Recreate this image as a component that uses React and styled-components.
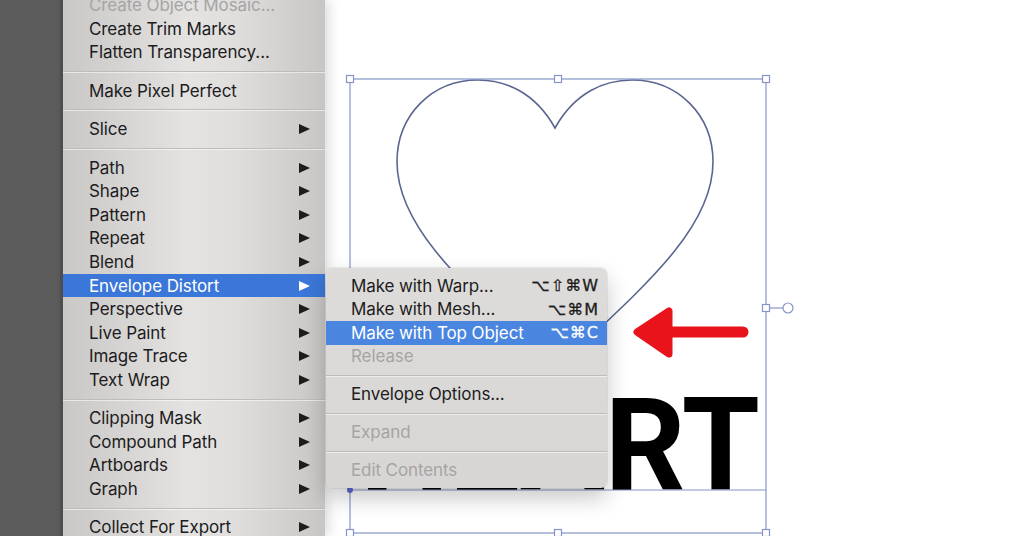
import React from "react";
import styled, { createGlobalStyle } from "styled-components";

const GlobalStyle = createGlobalStyle`
  html, body {
    margin: 0;
    padding: 0;
    background: #fff;
  }
  body {
    font-family: Inter, "Liberation Sans", "DejaVu Sans", sans-serif;
  }
`;

const Page = styled.div`
  display: flex;
  width: 1024px;
  height: 536px;
  overflow: hidden;
`;

const Dock = styled.div`
  width: 63px;
  flex: none;
  background: #5c5c5c;
  box-shadow: inset -3px 0 0 #515151;
`;

const Menu = styled.ul`
  width: 262px;
  flex: none;
  margin: 0;
  padding: 0;
  list-style: none;
  position: relative;
  z-index: 2;
  overflow: hidden;
  background: linear-gradient(
    90deg,
    #cac8c7 0%,
    #d6d4d3 22%,
    #e4e3e2 48%,
    #dfdedd 66%,
    #d2d0cf 86%,
    #c8c6c5 100%
  );
  box-shadow: 3px 0 12px rgba(0, 0, 0, 0.16);
`;

const MenuBody = styled.div`
  margin-top: -6.6px;
`;

const Item = styled.li`
  display: flex;
  align-items: center;
  justify-content: space-between;
  height: 23.6px;
  padding: 0 ${(p) => p.$padRight || 15}px 0 ${(p) => p.$padLeft || 26}px;
  font-size: 17px;
  letter-spacing: -0.1px;
  white-space: nowrap;
  color: ${(p) => (p.$active ? "#fff" : p.$disabled ? "#a6a4a3" : "#1c1c1c")};
  background: ${(p) => (p.$active ? p.$hl || "#3b77d8" : "transparent")};
`;

const Arrow = styled.span`
  width: 0;
  height: 0;
  border-left: 11px solid currentColor;
  border-top: 5.5px solid transparent;
  border-bottom: 5.5px solid transparent;
`;

const Separator = styled.li`
  height: ${(p) => p.$h || 14.8}px;
  display: flex;
  align-items: center;
  &::before {
    content: "";
    flex: 1;
    height: 1px;
    background: #bebcbb;
    box-shadow: 0 1px 0 rgba(255, 255, 255, 0.55);
  }
`;

const Canvas = styled.div`
  flex: 1;
  position: relative;
  background: #fff;
`;

const Artwork = styled.svg`
  display: block;
`;

const Submenu = styled.ul`
  position: absolute;
  left: 1px;
  top: 268px;
  width: 281px;
  margin: 0;
  padding: 5.8px 0 6px;
  list-style: none;
  border-radius: 6px;
  background: linear-gradient(180deg, #dedcdb 0%, #d8d6d5 100%);
  box-shadow: 0 10px 22px rgba(0, 0, 0, 0.22), 0 0 0 0.5px rgba(0, 0, 0, 0.12);
  z-index: 3;
`;

const Shortcut = styled.span`
  font-family: "DejaVu Sans", Inter, sans-serif;
  font-size: 16px;
  letter-spacing: 1px;
  -webkit-text-stroke: 0.3px currentColor;
`;

const mainItems = [
  { label: "Create Object Mosaic...", disabled: true },
  { label: "Create Trim Marks" },
  { label: "Flatten Transparency..." },
  "sep",
  { label: "Make Pixel Perfect" },
  "sep",
  { label: "Slice", sub: true },
  "sep",
  { label: "Path", sub: true },
  { label: "Shape", sub: true },
  { label: "Pattern", sub: true },
  { label: "Repeat", sub: true },
  { label: "Blend", sub: true },
  { label: "Envelope Distort", sub: true, active: true },
  { label: "Perspective", sub: true },
  { label: "Live Paint", sub: true },
  { label: "Image Trace", sub: true },
  { label: "Text Wrap", sub: true },
  "sep",
  { label: "Clipping Mask", sub: true },
  { label: "Compound Path", sub: true },
  { label: "Artboards", sub: true },
  { label: "Graph", sub: true },
  "sep",
  { label: "Collect For Export", sub: true },
];

const subItems = [
  { label: "Make with Warp...", keys: "⌥⇧⌘W" },
  { label: "Make with Mesh...", keys: "⌥⌘M" },
  { label: "Make with Top Object", keys: "⌥⌘C", active: true },
  { label: "Release", disabled: true },
  "sep",
  { label: "Envelope Options..." },
  "sep",
  { label: "Expand", disabled: true },
  "sep",
  { label: "Edit Contents", disabled: true },
];

const BOX = "#8595c8";
const handles = [
  [350, 79],
  [558, 79],
  [766, 79],
  [766, 308],
  [350, 533],
  [558, 533],
  [766, 533],
];

const heart =
  "M555 128 C535 92 505 80 478 80 C432 80 397 115 397 162 " +
  "C397 230 470 290 555 370 C640 290 713 230 713 162 " +
  "C713 115 678 80 632 80 C605 80 575 92 555 128 Z";

export default function App() {
  return (
    <Page>
      <GlobalStyle />
      <Dock />
      <Menu>
        <MenuBody>
          {mainItems.map((it, i) =>
            it === "sep" ? (
              <Separator key={i} />
            ) : (
              <Item key={i} $active={it.active} $disabled={it.disabled}>
                <span>{it.label}</span>
                {it.sub && <Arrow />}
              </Item>
            )
          )}
        </MenuBody>
      </Menu>
      <Canvas>
        <Artwork width="699" height="536" viewBox="325 0 699 536">
          <text
            x="360"
            y="490"
            fontFamily="Roboto, 'Liberation Sans', sans-serif"
            fontWeight="700"
            fontSize="130"
            textLength="400"
            lengthAdjust="spacingAndGlyphs"
            fill="#000"
          >
            HEART
          </text>
          <path d={heart} fill="none" stroke="#5b6690" strokeWidth="1.6" />
          <rect x="350" y="79" width="416" height="454" fill="none" stroke={BOX} strokeWidth="1.2" />
          <line x1="350" y1="490" x2="766" y2="490" stroke={BOX} strokeWidth="1.2" />
          <circle cx="350" cy="490" r="3" fill="#5a6bd0" />
          <line x1="769" y1="308" x2="783" y2="308" stroke={BOX} strokeWidth="1.2" />
          <circle cx="788" cy="308" r="5" fill="#fff" stroke={BOX} strokeWidth="1.2" />
          {handles.map(([x, y], i) => (
            <rect key={i} x={x - 3.5} y={y - 3.5} width="7" height="7" fill="#fff" stroke={BOX} strokeWidth="1.2" />
          ))}
          <g fill="#e8131b" stroke="#e8131b" strokeLinejoin="round" strokeLinecap="round">
            <polygon points="637,332 669,311 669,354" strokeWidth="7" />
            <line x1="668" y1="332" x2="743" y2="332" strokeWidth="11" />
          </g>
        </Artwork>
        <Submenu>
          {subItems.map((it, i) =>
            it === "sep" ? (
              <Separator key={i} $h={14.4} />
            ) : (
              <Item
                key={i}
                $active={it.active}
                $disabled={it.disabled}
                $padLeft={25}
                $padRight={8}
                $hl="#4a86e0"
              >
                <span>{it.label}</span>
                {it.keys && <Shortcut>{it.keys}</Shortcut>}
              </Item>
            )
          )}
        </Submenu>
      </Canvas>
    </Page>
  );
}
